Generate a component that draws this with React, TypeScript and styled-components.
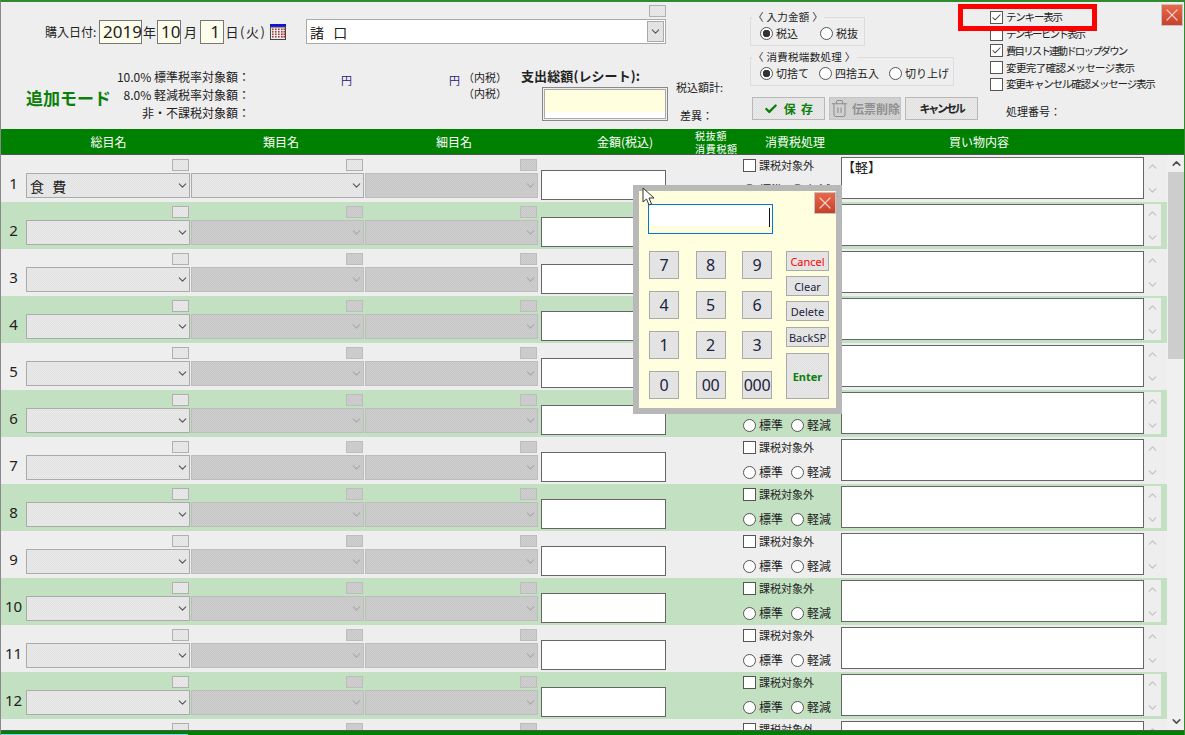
import React from "react";
import styled, { createGlobalStyle, css } from "styled-components";
import { Check, ChevronDown, ChevronUp, Trash2, X } from "lucide-react";

const Global = createGlobalStyle`
  html, body { margin: 0; padding: 0; background: #eeeeee; overflow: hidden; }
  * { box-sizing: border-box; }
  body { font-family: "Noto Sans CJK JP", "Liberation Sans", sans-serif; color: #222; }
`;

const dither = (a: string, b: string) => css`
  background: repeating-conic-gradient(${a} 0 25%, ${b} 0 50%) 0 0 / 2px 2px;
`;

const Window = styled.div`
  position: relative;
  width: 1185px;
  height: 735px;
  overflow: hidden;
  background: #eeeeee;
  border-top: 2px solid #2e8b2e;
  border-left: 1px solid #8a8a8a;
  border-right: 1px solid #2e8b2e;
  display: flex;
  flex-direction: column;
`;

const TopPanel = styled.div`
  height: 127px;
  flex: none;
  display: flex;
  position: relative;
`;

const FormBlock = styled.div`
  width: 669px;
  flex: none;
  padding-top: 3px;
  display: flex;
  flex-direction: column;
`;

const SmallRight = styled.div`
  display: flex;
  justify-content: flex-end;
  padding-right: 4px;
  height: 14px;
`;

const DateRow = styled.div`
  display: flex;
  align-items: center;
  height: 25px;
  padding-left: 44px;
  font-size: 12px;
  line-height: 1;
`;

const DateLabel = styled.span`
  width: 54px;
  font-size: 12px;
`;

const DateInput = styled.div<{ $w: number; $right?: boolean }>`
  width: ${(p) => p.$w}px;
  height: 24px;
  border: 1px solid #777;
  font-family: "Noto Sans", sans-serif;
  font-size: 17px;
  line-height: 22px;
  text-align: ${(p) => (p.$right ? "right" : "center")};
  padding: 0 3px;
  ${dither("#fffff0", "#fbfbe8")}
`;

const DateUnit = styled.span<{ $w: number }>`
  width: ${(p) => p.$w}px;
  font-size: 13px;
  text-align: center;
  flex: none;
`;

const Weekday = styled.span`
  width: 30px;
  font-size: 13px;
  white-space: nowrap;
  letter-spacing: 1.5px;
`;

const ShopSelect = styled.div`
  margin-left: 20px;
  width: 360px;
  height: 25px;
  background: #fff;
  border: 1px solid #aaa;
  display: flex;
  align-items: center;
  justify-content: space-between;
  padding-left: 3px;
  font-size: 14px;
  letter-spacing: 3px;
`;

const ShopArrow = styled.div`
  width: 17px;
  height: 21px;
  margin-right: 1px;
  border: 1px solid #aaa;
  display: flex;
  align-items: center;
  justify-content: center;
  color: #555;
  ${dither("#dfdfdf", "#e7e7e7")}
`;

const SummaryRow = styled.div`
  display: flex;
  padding-top: 24px;
`;

const ModeLabel = styled.div`
  width: 88px;
  margin-left: 25px;
  margin-top: 18px;
  font-size: 17px;
  line-height: 24px;
  font-weight: 700;
  color: #0a800a;
  white-space: nowrap;
`;

const RateList = styled.div`
  width: 136px;
  display: flex;
  flex-direction: column;
  font-size: 12px;
  line-height: 18px;
  text-align: right;
  white-space: nowrap;
`;

const YenA = styled.div`
  width: 102px;
  text-align: right;
  font-size: 11px;
  line-height: 14px;
  color: #2a1a78;
  padding-top: 5px;
`;

const YenB = styled(YenA)`
  width: 108px;
`;

const TaxNotes = styled.div`
  width: 61px;
  padding-left: 3px;
  padding-top: 1px;
  font-size: 11px;
  line-height: 16px;
  white-space: nowrap;
`;

const TotalBlock = styled.div`
  width: 148px;
  display: flex;
  flex-direction: column;
`;

const TotalLabel = styled.div`
  font-size: 13px;
  font-weight: 700;
  line-height: 16px;
  white-space: nowrap;
  letter-spacing: 0.1px;
`;

const TotalBox = styled.div`
  margin-top: 3px;
  margin-left: 21px;
  width: 126px;
  height: 34px;
  border: 1px solid #888;
  padding: 1px;
  background: #eee;
`;

const TotalInner = styled.div`
  height: 100%;
  border: 1px solid #aaa;
  background: linear-gradient(#ffffe0 0 22px, #fff 22px);
`;

const DiffBlock = styled.div`
  width: 80px;
  flex: none;
  padding: 78px 0 0 6px;
  font-size: 11px;
  line-height: 14px;
  white-space: nowrap;
`;

const DiffLine = styled.div<{ $indent?: number }>`
  padding-left: ${(p) => p.$indent || 0}px;
  margin-bottom: 14px;
`;

const ControlBlock = styled.div`
  width: 240px;
  flex: none;
  padding-top: 15px;
  display: flex;
  flex-direction: column;
`;

const Group = styled.div<{ $w: number; $gap: number }>`
  width: ${(p) => p.$w}px;
  height: 29px;
  margin: 0 0 11px 0;
  padding: 3px 0 0 9px;
  border: 1px solid #dcdcdc;
  display: flex;
  align-items: center;
  gap: ${(p) => p.$gap}px;
  position: relative;
  font-size: 11px;
`;

const GroupCaption = styled.span`
  position: absolute;
  top: -7px;
  left: 1px;
  background: #eee;
  padding: 0 1px;
  font-size: 10.5px;
  line-height: 12px;
  letter-spacing: 0.3px;
  white-space: nowrap;
`;

const RadioLabel = styled.span`
  display: inline-flex;
  align-items: center;
  gap: 3px;
  line-height: 14px;
  white-space: nowrap;
`;

const RadioDot = styled.span<{ $on?: boolean }>`
  width: 13px;
  height: 13px;
  border-radius: 50%;
  border: 1px solid #555;
  background: #fff;
  display: inline-block;
  flex: none;
  position: relative;
  ${(p) =>
    p.$on &&
    css`
      background: radial-gradient(circle, #333 0 3.5px, #fff 4px);
    `}
`;

const ButtonRow = styled.div`
  display: flex;
  gap: 4px;
  margin-left: 2px;
`;

const ActionButton = styled.div<{ $w: number; $muted?: boolean; $color?: string; $tight?: boolean }>`
  width: ${(p) => p.$w}px;
  height: 23px;
  border: 1px solid ${(p) => (p.$muted ? "#c4c4c4" : "#b8b8b8")};
  display: flex;
  align-items: center;
  justify-content: center;
  gap: 3px;
  font-size: ${(p) => (p.$tight ? "11px" : "12px")};
  font-weight: 700;
  letter-spacing: ${(p) => (p.$tight ? "-2.2px" : "0")};
  line-height: 1;
  white-space: nowrap;
  color: ${(p) => p.$color || "#222"};
  ${(p) => (p.$muted ? dither("#cdcdcd", "#d4d4d4") : dither("#e2e2e2", "#e9e9e9"))}
`;

const OptionsBlock = styled.div`
  width: 170px;
  flex: none;
  padding-top: 7px;
  display: flex;
  flex-direction: column;
`;

const OptionRow = styled.div<{ $spacing: number }>`
  height: 16.8px;
  display: flex;
  align-items: center;
  gap: 3px;
  font-size: 10.5px;
  line-height: 1;
  white-space: nowrap;
  letter-spacing: ${(p) => p.$spacing}px;
`;

const Box = styled.span`
  width: 13px;
  height: 13px;
  flex: none;
  background: #fff;
  border: 1px solid #555;
  display: inline-flex;
  align-items: center;
  justify-content: center;
  color: #444;
  letter-spacing: 0;
`;

const ProcNo = styled.div`
  margin-top: 11px;
  padding-left: 16px;
  font-size: 11px;
  line-height: 14px;
`;

const CloseButton = styled.div`
  width: 22px;
  height: 22px;
  border: 1px solid #c4c4c4;
  background: linear-gradient(#e8694a, #c8402a);
  display: flex;
  align-items: center;
  justify-content: center;
  color: #edcfc6;
`;

const CloseSlot = styled.div`
  margin-top: 2px;
  margin-left: 1px;
`;

const SmallBtn = styled.div<{ $off?: boolean }>`
  width: 17px;
  height: 12px;
  border: 1px solid ${(p) => (p.$off ? "#bdbdbd" : "#b0b0b0")};
  ${(p) => (p.$off ? dither("#c8c8c8", "#cfcfcf") : dither("#e2e2e2", "#e9e9e9"))}
`;

const HeaderBar = styled.div`
  height: 26px;
  flex: none;
  background: #008000;
  border-bottom: 1px solid #555;
  color: #fff;
  display: grid;
  grid-template-columns: 25px 165px 180px 166px 152px 44px 124px 244px;
  align-items: center;
  font-size: 12px;
  line-height: 1;
  text-align: center;
`;

const HeadCell = styled.div<{ $pad?: number }>`
  padding-left: ${(p) => p.$pad || 0}px;
  white-space: nowrap;
`;

const HeadTiny = styled.div`
  font-size: 10px;
  line-height: 13px;
  white-space: nowrap;
  justify-self: start;
  text-align: left;
  margin-left: 6px;
  letter-spacing: 0.7px;
`;

const Body = styled.div`
  flex: 1;
  min-height: 0;
  display: flex;
`;

const RowsArea = styled.div`
  width: 1166px;
  flex: none;
  overflow: hidden;
`;

const Row = styled.div<{ $alt: boolean }>`
  height: 47px;
  display: grid;
  grid-template-columns: 25px 165px 174px 174px 204px 98px 303px 17px;
  padding-right: 5px;
  ${(p) => (p.$alt ? dither("#bfdfbf", "#c5e2c5") : "background: #eeeeee;")}
`;

const RowNo = styled.div`
  padding-top: 18px;
  text-align: center;
  font-family: "Noto Sans", sans-serif;
  font-size: 15px;
  line-height: 20px;
`;

const SelectCell = styled.div`
  display: flex;
  flex-direction: column;
  align-items: flex-end;
  padding-top: 4px;
  padding-right: 1px;
`;

const CellButton = styled(SmallBtn)`
  margin-right: 1px;
  margin-bottom: 2px;
`;

const SelectBox = styled.div<{ $off?: boolean }>`
  width: 100%;
  height: 25px;
  border: 1px solid ${(p) => (p.$off ? "#bdbdbd" : "#ababab")};
  display: flex;
  align-items: center;
  justify-content: space-between;
  padding: 0 0 0 3px;
  font-size: 14px;
  line-height: 1;
  letter-spacing: 2.5px;
  color: ${(p) => (p.$off ? "#aaa" : "#555")};
  ${(p) => (p.$off ? dither("#c6c6c6", "#cecece") : dither("#e2e2e2", "#e9e9e9"))}
`;

const SelectText = styled.span`
  color: #222;
`;

const MoneyCell = styled.div`
  padding: 15px 0 0 2px;
`;

const MoneyInput = styled.div`
  width: 125px;
  height: 30px;
  background: #fff;
  border: 1px solid #666;
`;

const TaxCell = styled.div`
  display: flex;
  flex-direction: column;
  padding-top: 4px;
  font-size: 11px;
  line-height: 1;
`;

const TaxTop = styled.div`
  height: 13px;
  display: flex;
  align-items: center;
  gap: 3px;
  white-space: nowrap;
`;

const TaxRadios = styled.div`
  margin-top: 11px;
  display: flex;
  gap: 8px;
  font-size: 12px;
`;

const MemoCell = styled.div`
  padding-top: 2px;
`;

const Memo = styled.div`
  width: 303px;
  height: 42px;
  background: #fff;
  border: 1px solid #666;
  padding: 1px 0 1px 0;
  font-size: 13px;
  line-height: 16px;
`;

const SpinCell = styled.div`
  background: #eeeeee;
  margin: 2px 0 3px 0;
  display: flex;
  flex-direction: column;
  align-items: center;
  justify-content: space-between;
  padding: 3px 0 2px 0;
  color: #c4c4c4;
  height: 42px;
`;

const ScrollBar = styled.div`
  width: 18px;
  flex: none;
  background: #f0f0f0;
  display: flex;
  flex-direction: column;
  align-items: center;
  color: #505050;
`;

const ScrollEnd = styled.div`
  width: 17px;
  height: 17px;
  display: flex;
  align-items: center;
  justify-content: center;
  flex: none;
`;

const ScrollThumb = styled.div`
  width: 17px;
  height: 187px;
  flex: none;
  ${dither("#cbcbcb", "#d0d0d0")}
`;

const ScrollGap = styled.div`
  flex: 1;
`;

const FooterBar = styled.div`
  height: 5px;
  flex: none;
  background: #008000;
  border-top: 1px solid #555;
  display: flex;
  align-items: flex-end;
`;

const FooterTrace = styled.div`
  width: 187px;
  height: 1px;
  background: #7fd8e8;
`;

const RedMark = styled.div`
  position: absolute;
  left: 957px;
  top: 2px;
  width: 139px;
  height: 27px;
  border: 5px solid #ff0000;
  pointer-events: none;
`;

const TenKeyPopup = styled.div`
  position: absolute;
  left: 632px;
  top: 183px;
  width: 209px;
  height: 229px;
  border: 6px solid #b8b8b8;
  background: #ffffe0;
  padding: 13px 7px 0 9px;
  display: flex;
  flex-direction: column;
`;

const PopupClose = styled.div`
  position: absolute;
  top: 1px;
  right: 0;
`;

const PopupInput = styled.div`
  width: 125px;
  height: 30px;
  border: 1px solid #0078d7;
  background: linear-gradient(#fff 0 21px, #ffffe0 21px);
  display: flex;
  justify-content: flex-end;
  padding: 3px 2px 6px 0;
`;

const Caret = styled.span`
  width: 1px;
  background: #111;
  display: block;
`;

const PadArea = styled.div`
  margin-top: 17px;
  padding-left: 1px;
  display: flex;
  justify-content: space-between;
`;

const NumGrid = styled.div`
  width: 123px;
  display: grid;
  grid-template-columns: 30px 30px 30px;
  grid-auto-rows: 28px;
  justify-content: space-between;
  row-gap: 12px;
`;

const NumKey = styled.div`
  border: 1px solid #aaa;
  display: flex;
  align-items: center;
  justify-content: center;
  font-family: "Noto Sans", sans-serif;
  font-size: 16px;
  line-height: 1;
  color: #1c2340;
  white-space: nowrap;
  letter-spacing: -0.3px;
  ${dither("#e0e0e0", "#e7e7e7")}
`;

const SideKeys = styled.div`
  width: 43px;
  display: flex;
  flex-direction: column;
`;

const SideKey = styled.div<{ $h: number; $top: number; $color?: string; $bold?: boolean }>`
  height: ${(p) => p.$h}px;
  margin-top: ${(p) => p.$top}px;
  border: 1px solid #aaa;
  display: flex;
  align-items: center;
  justify-content: center;
  font-family: "Noto Sans", sans-serif;
  font-size: 11px;
  line-height: 1;
  font-weight: ${(p) => (p.$bold ? 700 : 400)};
  color: ${(p) => p.$color || "#1c2340"};
  ${dither("#e0e0e0", "#e7e7e7")}
`;

const CursorMark = styled.svg`
  position: absolute;
  left: 641px;
  top: 185px;
  pointer-events: none;
`;

const Chevron = () => <ChevronDown size={13} strokeWidth={2} />;

const Radio = ({ on, label }: { on?: boolean; label: string }) => (
  <RadioLabel>
    <RadioDot $on={on} />
    {label}
  </RadioLabel>
);

const Option = ({ on, label, spacing }: { on?: boolean; label: string; spacing: number }) => (
  <OptionRow $spacing={spacing}>
    <Box>{on && <Check size={11} strokeWidth={2.2} />}</Box>
    {label}
  </OptionRow>
);

const CalendarIcon = () => (
  <svg width="16" height="16" viewBox="0 0 16 16" style={{ flex: "none" }}>
    <rect x="0" y="0" width="16" height="3" fill="#1010e0" />
    <rect x="0.5" y="3" width="15" height="12.5" fill="#eee" stroke="#444" />
    {[4.5, 7, 9.5, 12].map((y) =>
      [2, 5, 8, 11, 13.5].map((x) => (
        <rect key={`${x}-${y}`} x={x} y={y} width="1.6" height="1.6" fill={y > 9 && x > 8 ? "#c02020" : "#a04040"} />
      ))
    )}
  </svg>
);

const rows = Array.from({ length: 13 }, (_, i) => i + 1);

export default function App() {
  return (
    <>
      <Global />
      <Window>
        <TopPanel>
          <FormBlock>
            <SmallRight>
              <SmallBtn />
            </SmallRight>
            <DateRow>
              <DateLabel>購入日付:</DateLabel>
              <DateInput $w={43}>2019</DateInput>
              <DateUnit $w={15}>年</DateUnit>
              <DateInput $w={24}>10</DateInput>
              <DateUnit $w={19}>月</DateUnit>
              <DateInput $w={24} $right>1</DateInput>
              <DateUnit $w={16}>日</DateUnit>
              <Weekday>(火)</Weekday>
              <CalendarIcon />
              <ShopSelect>
                諸 口
                <ShopArrow>
                  <Chevron />
                </ShopArrow>
              </ShopSelect>
            </DateRow>
            <SummaryRow>
              <ModeLabel>追加モード</ModeLabel>
              <RateList>
                <span>10.0% 標準税率対象額：</span>
                <span>8.0% 軽減税率対象額：</span>
                <span>非・不課税対象額：</span>
              </RateList>
              <YenA>円</YenA>
              <YenB>円</YenB>
              <TaxNotes>
                <div>（内税）</div>
                <div>（内税）</div>
              </TaxNotes>
              <TotalBlock>
                <TotalLabel>支出総額(レシート):</TotalLabel>
                <TotalBox>
                  <TotalInner />
                </TotalBox>
              </TotalBlock>
            </SummaryRow>
          </FormBlock>
          <DiffBlock>
            <DiffLine>税込額計:</DiffLine>
            <DiffLine $indent={4}>差異：</DiffLine>
          </DiffBlock>
          <ControlBlock>
            <Group $w={115} $gap={22}>
              <GroupCaption>〈 入力金額 〉</GroupCaption>
              <Radio on label="税込" />
              <Radio label="税抜" />
            </Group>
            <Group $w={204} $gap={10}>
              <GroupCaption>〈 消費税端数処理 〉</GroupCaption>
              <Radio on label="切捨て" />
              <Radio label="四捨五入" />
              <Radio label="切り上げ" />
            </Group>
            <ButtonRow>
              <ActionButton $w={73} $color="#0a800a">
                <Check size={14} strokeWidth={4} />
                &nbsp;保&nbsp;&nbsp;存
              </ActionButton>
              <ActionButton $w={72} $muted $color="#8f8f8f">
                <Trash2 size={19} strokeWidth={1.3} />
                伝票削除
              </ActionButton>
              <ActionButton $w={73} $tight>キャンセル</ActionButton>
            </ButtonRow>
          </ControlBlock>
          <OptionsBlock>
            <Option on label="テンキー表示" spacing={-1.2} />
            <Option label="テンキーヒント表示" spacing={-1.8} />
            <Option on label="費目リスト連動ドロップダウン" spacing={-1.9} />
            <Option label="変更完了確認メッセージ表示" spacing={-0.6} />
            <Option label="変更キャンセル確認メッセージ表示" spacing={-1.2} />
            <ProcNo>処理番号：</ProcNo>
          </OptionsBlock>
          <CloseSlot>
            <CloseButton>
              <X size={20} strokeWidth={1.5} />
            </CloseButton>
          </CloseSlot>
        </TopPanel>
        <HeaderBar>
          <span />
          <HeadCell>総目名</HeadCell>
          <HeadCell>類目名</HeadCell>
          <HeadCell>細目名</HeadCell>
          <HeadCell $pad={24}>金額(税込)</HeadCell>
          <HeadTiny>
            税抜額
            <br />
            消費税額
          </HeadTiny>
          <HeadCell>消費税処理</HeadCell>
          <HeadCell>買い物内容</HeadCell>
        </HeaderBar>
        <Body>
          <RowsArea>
            {rows.map((n) => (
              <Row key={n} $alt={n % 2 === 0}>
                <RowNo>{n}</RowNo>
                <SelectCell>
                  <CellButton />
                  <SelectBox>
                    <SelectText>{n === 1 ? "食 費" : ""}</SelectText>
                    <Chevron />
                  </SelectBox>
                </SelectCell>
                <SelectCell>
                  <CellButton $off={n !== 1} />
                  <SelectBox $off={n !== 1}>
                    <span />
                    <Chevron />
                  </SelectBox>
                </SelectCell>
                <SelectCell>
                  <CellButton $off />
                  <SelectBox $off>
                    <span />
                    <Chevron />
                  </SelectBox>
                </SelectCell>
                <MoneyCell>
                  <MoneyInput />
                </MoneyCell>
                <TaxCell>
                  <TaxTop>
                    <Box />
                    課税対象外
                  </TaxTop>
                  <TaxRadios>
                    <Radio label="標準" />
                    <Radio label="軽減" />
                  </TaxRadios>
                </TaxCell>
                <MemoCell>
                  <Memo>{n === 1 ? "【軽】" : ""}</Memo>
                </MemoCell>
                <SpinCell>
                  <ChevronUp size={13} strokeWidth={2.5} />
                  <ChevronDown size={13} strokeWidth={2.5} />
                </SpinCell>
              </Row>
            ))}
          </RowsArea>
          <ScrollBar>
            <ScrollEnd>
              <ChevronUp size={13} strokeWidth={3} />
            </ScrollEnd>
            <ScrollThumb />
            <ScrollGap />
            <ScrollEnd>
              <ChevronDown size={13} strokeWidth={3} />
            </ScrollEnd>
          </ScrollBar>
        </Body>
        <FooterBar>
          <FooterTrace />
        </FooterBar>
        <RedMark />
        <TenKeyPopup>
          <PopupClose>
            <CloseButton>
              <X size={20} strokeWidth={1.5} />
            </CloseButton>
          </PopupClose>
          <PopupInput>
            <Caret />
          </PopupInput>
          <PadArea>
            <NumGrid>
              {["7", "8", "9", "4", "5", "6", "1", "2", "3", "0", "00", "000"].map((k) => (
                <NumKey key={k}>{k}</NumKey>
              ))}
            </NumGrid>
            <SideKeys>
              <SideKey $h={20} $top={0} $color="#ff0000">Cancel</SideKey>
              <SideKey $h={20} $top={5}>Clear</SideKey>
              <SideKey $h={20} $top={5}>Delete</SideKey>
              <SideKey $h={20} $top={6}>BackSP</SideKey>
              <SideKey $h={46} $top={6} $color="#0a800a" $bold>Enter</SideKey>
            </SideKeys>
          </PadArea>
        </TenKeyPopup>
        <CursorMark width="14" height="20" viewBox="0 0 14 20">
          <path d="M1 1 L1 15 L4.5 12 L7 18 L9.5 17 L7 11 L12 11 Z" fill="#fff" stroke="#333" strokeWidth="1" />
        </CursorMark>
      </Window>
    </>
  );
}
